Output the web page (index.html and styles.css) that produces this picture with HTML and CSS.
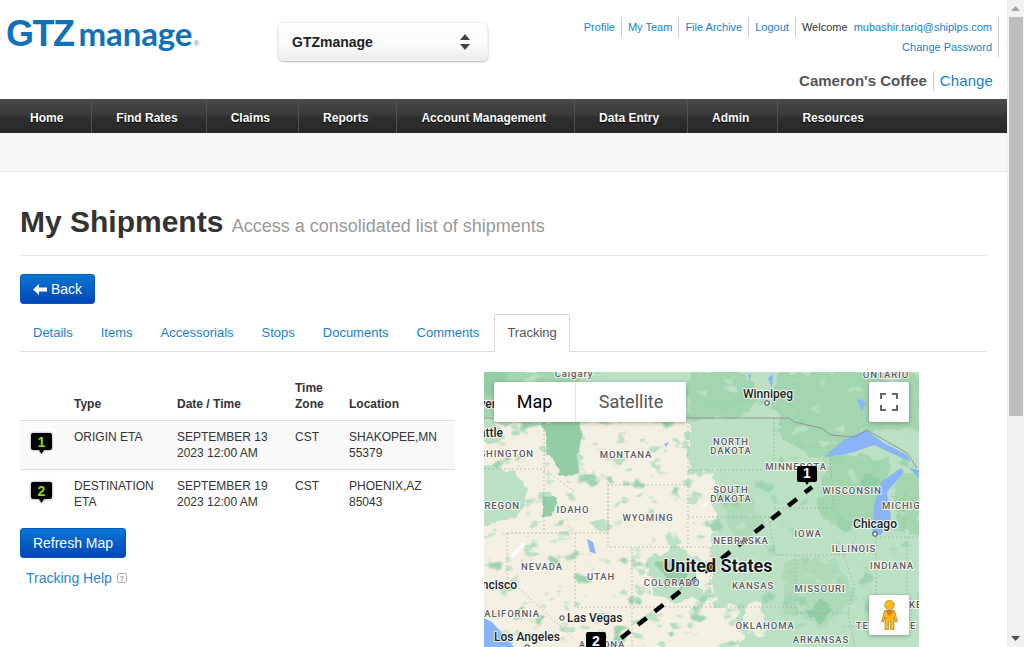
FILE: index.html
```html
<!DOCTYPE html>
<html lang="en">
<head>
<meta charset="utf-8">
<title>My Shipments</title>
<link rel="stylesheet" href="styles.css">
</head>
<body>
<div class="viewport">
  <main class="page">
    <header class="top">
      <a class="logo"><span class="logo-gtz">GTZ</span><span class="logo-manage">manage</span><span class="logo-reg">®</span></a>
      <div class="picker">
        <span>GTZmanage</span>
        <svg class="picker-arrows" width="10" height="16" viewBox="0 0 10 16"><path d="M5 0l5 6H0z M0 10h10l-5 6z" fill="#444"/></svg>
      </div>
      <div class="account">
        <div class="links">
          <a class="lnk">Profile</a><a class="lnk">My Team</a><a class="lnk">File Archive</a><a class="lnk">Logout</a><span class="lnk welcome">Welcome&nbsp; <a>mubashir.tariq@shiplps.com</a></span>
        </div>
        <div class="links"><a class="lnk last">Change Password</a></div>
        <div class="company"><b>Cameron's Coffee</b><a>Change</a></div>
      </div>
    </header>
    <nav class="nav">
      <a class="first">Home</a><a>Find Rates</a><a>Claims</a><a>Reports</a><a>Account Management</a><a>Data Entry</a><a>Admin</a><a class="plain">Resources</a>
    </nav>
    <div class="subbar"></div>
    <section class="content">
      <h1 class="title">My Shipments <small>Access a consolidated list of shipments</small></h1>
      <a class="btn back"><svg width="14" height="11" viewBox="0 0 14 11"><path d="M0 5.500L6 0v3.500h8v4H6V11z" fill="#fff"/></svg>Back</a>
      <ul class="tabs">
        <li>Details</li><li>Items</li><li>Accessorials</li><li>Stops</li><li>Documents</li><li>Comments</li><li class="active">Tracking</li>
      </ul>
      <div class="tracking">
        <div class="left">
          <table class="stops">
            <thead>
              <tr><th class="c-icon"></th><th class="c-type">Type</th><th class="c-date">Date / Time</th><th class="c-zone">Time Zone</th><th>Location</th></tr>
            </thead>
            <tbody>
              <tr class="odd">
                <td class="icon-cell"><svg class="pin" width="27" height="27" viewBox="0 0 27 27"><path class="pin-shape" d="M5 4h17a2 2 0 0 1 2 2v13a2 2 0 0 1-2 2h-6l-2.500 4-2.500-4H5a2 2 0 0 1-2-2V6a2 2 0 0 1 2-2z"/><text x="13.500" y="17.500" class="pin-num">1</text></svg></td>
                <td>ORIGIN ETA</td><td>SEPTEMBER 13 2023 12:00 AM</td><td>CST</td><td>SHAKOPEE,MN 55379</td>
              </tr>
              <tr>
                <td class="icon-cell"><svg class="pin" width="27" height="27" viewBox="0 0 27 27"><path class="pin-shape" d="M5 4h17a2 2 0 0 1 2 2v13a2 2 0 0 1-2 2h-6l-2.500 4-2.500-4H5a2 2 0 0 1-2-2V6a2 2 0 0 1 2-2z"/><text x="13.500" y="17.500" class="pin-num">2</text></svg></td>
                <td>DESTINATION ETA</td><td>SEPTEMBER 19 2023 12:00 AM</td><td>CST</td><td>PHOENIX,AZ 85043</td>
              </tr>
            </tbody>
          </table>
          <a class="btn refresh">Refresh Map</a>
          <p class="help"><a>Tracking Help</a><svg width="10" height="10" viewBox="0 0 10 10"><rect x=".5" y=".5" width="9" height="9" rx="1" fill="none" stroke="#aaa"/><text x="5" y="8" class="help-q">?</text></svg></p>
        </div>
        <div class="map">
          <svg class="map-art" width="435" height="275" viewBox="0 0 435 275">
            <defs>
              <filter id="terrain" x="-5%" y="-5%" width="110%" height="110%">
                <feTurbulence type="fractalNoise" baseFrequency=".07" numOctaves="3" seed="7" result="n"/>
                <feDisplacementMap in="SourceGraphic" in2="n" scale="16" xChannelSelector="R" yChannelSelector="G"/>
                <feGaussianBlur stdDeviation=".6"/>
              </filter>
              <filter id="speckle" x="0" y="0" width="100%" height="100%" color-interpolation-filters="sRGB">
                <feTurbulence type="fractalNoise" baseFrequency=".055 .075" numOctaves="3" seed="12"/>
                <feColorMatrix values="0 0 0 0 .733  0 0 0 0 .878  0 0 0 0 .769  9 0 0 0 -5.700"/>
                <feGaussianBlur stdDeviation=".4"/>
              </filter>
              <filter id="speckle-dark" x="0" y="0" width="100%" height="100%" color-interpolation-filters="sRGB">
                <feTurbulence type="fractalNoise" baseFrequency=".04 .05" numOctaves="3" seed="31"/>
                <feColorMatrix values="0 0 0 0 .62  0 0 0 0 .83  0 0 0 0 .68  0 9 0 0 -5.900"/>
                <feGaussianBlur stdDeviation=".5"/>
              </filter>
            </defs>
            <rect width="435" height="275" fill="#bbe0c4"/>
            <g filter="url(#terrain)">
              <path fill="#a3d5af" d="M290 0h145v60l-40-2-30 20-40 8-25-20-10-30zM345 88l30-6 30 6-5 30-12 30-40 10-15-30zM410 105l25-5v60l-22 0zM0 0h100v20l-30 25H0zM205 0h60l10 30-15 16h-55z"/>
              <path fill="#aedab8" d="M300 190l50-5 25 40-35 30-40-10zM235 120l30-5 15 40-30 10z"/>
              <path fill="#f4efe3" d="M-8 52h66l6 28 30 20 4-50h106v50h28v60l-6 15 4 60 24-2 3 50h-220l-16-25-30-10zM262 232l18-2 2 34-20-2z"/>
            </g>
            <rect width="435" height="275" filter="url(#speckle)"/>
            <rect width="435" height="275" filter="url(#speckle-dark)"/>
            <g filter="url(#terrain)">
              <path fill="#bbe0c4" d="M170 182l24-6 20 8 0 42-24 4-20-8-6-20zM-8 52h20l10 10-8 8-22 0zM-8 92l40 6 12 22-12 28-40 8z"/>
              <path fill="#93cda5" d="M60 48h36l-2 28-2 24-12 8-12-20-8-26zM60 120l14 6-6 20-10-4zM172 192l16-6 12 12-2 20-14-4zM0 0h26l-6 20-20 4zM325 235l14-6 8 10-10 12-10-4zM380 100l14 6-6 18-12-4z"/>
              <path fill="#e9efdd" d="M282 238l-14 2-8 16 20 4z"/>
            </g>
            <path fill="#8ab4f8" d="M340 85l20-17 22-10 18 13 23 12 4 7-20-9-17-8-20 7-13 3zM388 163l2-30 7-23 20-14 3 4-17 20 4 26-10 17zM425 96l10 2v8zM0 246l8 4 10 12 12 13H0zM284 6l5-4-1 14zM373 26l9 4-4 10zM103 167l6 3 3 12-6-2zM264 2l3 0-1 8zM180 72l5-2-3 5z"/>
            <path fill="#fff" d="M26 184l13-14 2 3-13 13zM218 133l7-5-4 7z"/>
            <path class="borders" d="M0 97h60M60 50v50M60 97l30 22M60 100v60M23 161h101v-48h80M204 50v125M124 113v62h102v60M91 161v74h135M148 176v99M23 161v44l68 63M204 98h86M204 145h81M285 145l6 38 7 0M290 46v52M290 136h60M298 183h62M312 183v58M312 241h52M226 235h86M364 241l6 30M350 136l22 30 -12 17 10 30-6 28M345 75l5 61M392 165v70M423 165v95M392 165h43M392 235l31 0M360 255l75-2M420 160v-40"/>
            <path class="canada" d="M0 46h305l5 4 27 6 10 7 23 2 13-7 40 23 10 15"/>
            <path class="route" d="M328 115L131 271"/>
            <g class="labels">
              <text class="st" x="90" y="5">Calgary</text>
              <text class="city" x="12" y="36" text-anchor="end">Vancouver</text>
              <text class="city" x="19" y="65" text-anchor="end">Seattle</text>
              <text class="st" x="50" y="85" text-anchor="end">WASHINGTON</text>
              <text class="st" x="142" y="86">MONTANA</text>
              <text class="st" x="247" y="73">NORTH</text>
              <text class="st" x="247" y="82">DAKOTA</text>
              <text class="st" x="247" y="121">SOUTH</text>
              <text class="st" x="247" y="130">DAKOTA</text>
              <text class="st" x="36" y="137" text-anchor="end">OREGON</text>
              <text class="st" x="89" y="141">IDAHO</text>
              <text class="st" x="164" y="149">WYOMING</text>
              <text class="st" x="58" y="198">NEVADA</text>
              <text class="st" x="117" y="208">UTAH</text>
              <text class="st" x="188" y="214">COLORADO</text>
              <text class="st" x="269" y="217">KANSAS</text>
              <text class="st" x="56" y="245" text-anchor="end">CALIFORNIA</text>
              <text class="st" x="281" y="257">OKLAHOMA</text>
              <text class="st" x="118" y="276">ARIZONA</text>
              <text class="st" x="402" y="6">ONTARIO</text>
              <text class="st" x="312" y="98">MINNESOTA</text>
              <text class="st" x="368" y="122">WISCONSIN</text>
              <text class="st" x="398" y="137" text-anchor="start">MICHIGAN</text>
              <text class="st" x="257" y="172">NEBRASKA</text>
              <text class="st" x="324" y="165">IOWA</text>
              <text class="st" x="370" y="180">ILLINOIS</text>
              <text class="st" x="408" y="197">INDIANA</text>
              <text class="st" x="336" y="220">MISSOURI</text>
              <text class="st" x="337" y="271">ARKANSAS</text>
              <text class="st" x="402" y="257">TENNESSEE</text>
              <text class="st" x="425" y="236" text-anchor="start">KENTUCKY</text>
              <text class="city" x="284" y="26">Winnipeg</text>
              <text class="city" x="391" y="156">Chicago</text>
              <text class="city" x="33" y="217" text-anchor="end">San Francisco</text>
              <text class="city" x="83" y="250" text-anchor="start">Las Vegas</text>
              <text class="city" x="43" y="269">Los Angeles</text>
              <text class="country" x="234" y="200">United States</text>
              <circle class="dot" cx="283" cy="31" r="2.200"/>
              <circle class="dot" cx="391" cy="162" r="2.200"/>
              <circle class="dot" cx="78" cy="246" r="2.200"/>
              <circle class="dot" cx="43" cy="275" r="2.200"/>
            </g>
            <g>
              <path d="M315 94h16a2 2 0 0 1 2 2v12a2 2 0 0 1-2 2h-6l-2 3-2-3h-6a2 2 0 0 1-2-2V96a2 2 0 0 1 2-2z" fill="#000"/>
              <text class="map-pin" x="323" y="106">1</text>
              <path d="M104 260h16a2 2 0 0 1 2 2v12a2 2 0 0 1-2 2h-6l-2 3-2-3h-6a2 2 0 0 1-2-2v-12a2 2 0 0 1 2-2z" fill="#000"/>
              <text class="map-pin" x="112" y="274">2</text>
            </g>
          </svg>
          <div class="map-type"><span class="on">Map</span><span>Satellite</span></div>
          <div class="map-ctl full"><svg width="18" height="18" viewBox="0 0 18 18"><path d="M0 6V0h6v2H2v4zM12 0h6v6h-2V2h-4zM0 12h2v4h4v2H0zM16 12h2v6h-6v-2h4z" fill="#666"/></svg></div>
          <div class="map-ctl peg"><svg width="17" height="30" viewBox="0 0 17 30"><circle cx="8.500" cy="5" r="4.800" fill="#fdb813" stroke="#a9812a" stroke-width=".6"/><path d="M3.500 10.500h10l3 11-2 .5-1.500-5v13H9.500v-8h-2v8H4v-13l-1.500 5-2-.5z" fill="#fdb813" stroke="#8c7a3d" stroke-width=".6"/><path d="M4 10.500h9l-4.500 6z" fill="#e8762d"/></svg></div>
        </div>
      </div>
    </section>
  </main>
  <aside class="scrollbar">
    <div class="sb-btn"><svg width="9" height="5" viewBox="0 0 9 5"><path d="M4.500 0L9 5H0z" fill="#a3a3a3"/></svg></div>
    <div class="sb-thumb"></div>
    <div class="sb-space"></div>
    <div class="sb-btn"><svg width="9" height="5" viewBox="0 0 9 5"><path d="M0 0h9L4.500 5z" fill="#505050"/></svg></div>
  </aside>
</div>
</body>
</html>
```

FILE: styles.css
```css
* { box-sizing: border-box; }
html, body { margin: 0; padding: 0; height: 647px; overflow: hidden; background: #fff; }
body { font-family: "Liberation Sans", Arial, sans-serif; font-size: 14px; color: #333; }
a { color: #1a7fc9; text-decoration: none; }

.viewport { display: flex; height: 647px; overflow: hidden; }
.page { width: 1007px; flex: none; height: 647px; overflow: hidden; }

.scrollbar { width: 17px; flex: none; background: #f1f1f1; display: flex; flex-direction: column; }
.sb-btn { height: 17px; flex: none; display: flex; align-items: center; justify-content: center; }
.sb-thumb { height: 399px; margin: 0 1px 0 2px; background: #bdbdbd; flex: none; }
.sb-space { flex: 1; }

.top { height: 99px; display: flex; position: relative; }
.logo { width: 278px; flex: none; padding: 11px 0 0 6px; color: #0f71b8; display: flex; align-items: baseline; height: 60px; white-space: nowrap; }
.logo-gtz { font: 700 36px/44px "Liberation Sans", sans-serif; letter-spacing: -1.500px; }
.logo-manage { font: 700 33px/44px Lato, sans-serif; margin-left: 5px; letter-spacing: -.1px; }
.logo-reg { font: 400 8px/10px "Liberation Sans", sans-serif; margin-left: 1px; color: #4d9bd0; }

.picker { width: 210px; height: 39px; margin-top: 22px; flex: none; padding: 0 17px 0 13px; display: flex; align-items: center; justify-content: space-between; font-weight: 700; font-size: 14px; color: #222; border-radius: 6px; border: 1px solid #f0f0f0; background: linear-gradient(#fff, #fafafa 60%, #ececec); box-shadow: 0 1px 2px rgba(0,0,0,.3); }

.account { flex: 1; padding: 17px 8px 0 0; display: flex; flex-direction: column; align-items: flex-end; font-size: 11px; }
.links { display: flex; height: 20px; align-items: stretch; border-right: 1px solid #ccc; }
.lnk { padding: 0 6px; line-height: 20px; border-right: 1px solid #ccc; }
.lnk:last-child { border-right: 0; }
.welcome { color: #333; }
.company { margin-top: 14px; margin-right: 6px; display: flex; height: 20px; align-items: center; }
.company b { font-size: 15px; color: #555; padding-right: 6px; border-right: 1px solid #ccd; line-height: 20px; white-space: nowrap; }
.company a { font-size: 15px; padding-left: 6px; line-height: 20px; letter-spacing: .1px; }

.nav { height: 34px; display: flex; background: linear-gradient(#4b4b4b, #3a3a3a 45%, #2f2f2f 55%, #282828); }
.nav a { font-size: 12px; font-weight: 700; color: #fff; line-height: 38px; height: 34px; padding: 0 28px 0 24px; border-right: 1px solid #515151; text-shadow: 0 1px 1px #000; }
.nav a.first { padding-left: 30px; }
.nav a.plain { border-right: 0; }

.subbar { height: 39px; background: #f7f7f7; border-bottom: 1px solid #e2e2e2; }

.content { padding: 0 20px; }
.title { margin: 32px 0 0; height: 52px; font-size: 30px; font-weight: 700; line-height: 36px; color: #333; border-bottom: 1px solid #e8e8e8; white-space: nowrap; }
.title small { font-size: 18px; font-weight: 400; color: #999; }

.btn { display: inline-flex; align-items: center; justify-content: center; height: 30px; font-size: 14px; color: #fff; border-radius: 3px; background: linear-gradient(#0a76d2, #0046b8); border: 1px solid #0058c0; }
.back { width: 75px; margin-top: 18px; gap: 4px; }

.tabs { list-style: none; margin: 10px 0 0; padding: 0; display: flex; height: 38px; border-bottom: 1px solid #ddd; font-size: 13px; color: #1a7fc9; }
.tabs li { padding: 0 13px; margin-right: 2px; line-height: 36px; height: 38px; border: 1px solid transparent; border-left: 0; border-right: 0; }
.tabs li.active { padding: 0 12px; color: #555; background: #fff; border: 1px solid #ddd; border-bottom-color: #fff; }

.tracking { display: flex; gap: 29px; margin-top: 20px; align-items: flex-start; }
.left { width: 435px; flex: none; }

.stops { width: 435px; border-collapse: collapse; table-layout: fixed; font-size: 12px; line-height: 16px; margin-top: 8px; }
.stops th { text-align: left; vertical-align: bottom; padding: 0 8px 8px; color: #333; border-bottom: 1px solid #ddd; font-weight: 700; }
.stops td { vertical-align: top; padding: 8px 8px 8px; border-bottom: 1px solid #ddd; }
.stops tr:last-child td { border-bottom: 0; }
.stops .odd { background: #f9f9f9; }
.c-icon { width: 46px; }
.c-type { width: 103px; }
.c-date { width: 118px; }
.c-zone { width: 54px; }
.icon-cell { padding: 8px 0 0 8px !important; line-height: 0; }
.pin { background: #fff; display: block; }
.pin-shape { fill: #000; filter: drop-shadow(0 0 1.500px rgba(0,0,0,.45)); }
.pin-num { font: 700 14px "Liberation Sans", sans-serif; fill: #8fd61f; text-anchor: middle; }

.refresh { width: 106px; margin-top: 10px; }
.help { margin: 12px 0 0 6px; display: flex; align-items: center; gap: 5px; line-height: 16px; }
.help a { color: #2a86c8; }
.help-q { font: 700 7px "Liberation Sans", sans-serif; fill: #999; text-anchor: middle; }

.map { width: 435px; height: 275px; flex: none; position: relative; overflow: hidden; }
.map-art { display: block; }
.borders { fill: none; stroke: #9a9a9a; stroke-width: .7; stroke-dasharray: 2 2; opacity: .8; }
.canada { fill: none; stroke: #86888a; stroke-width: .8; }
.route { fill: none; stroke: #000; stroke-width: 4.500; stroke-dasharray: 11 10.300; stroke-dashoffset: 2; }
.labels text { font-family: Roboto, sans-serif; text-anchor: middle; paint-order: stroke; stroke: rgba(255,255,255,.85); stroke-width: 2px; stroke-linejoin: round; }
.labels .st { font-size: 9.500px; letter-spacing: .9px; font-weight: 500; fill: #5b5b5b; }
.labels .city { font-size: 12px; font-weight: 500; fill: #222; }
.labels .country { font-size: 18px; font-weight: 700; fill: #17191b; }
.labels text[text-anchor="end"] { text-anchor: end; }
.labels text[text-anchor="start"] { text-anchor: start; }
.dot { fill: #fff; stroke: #333; stroke-width: 1; }
.map-pin { font: 700 14px "Liberation Sans", sans-serif; fill: #fff; text-anchor: middle; }

.map-type { position: absolute; left: 10px; top: 10px; height: 40px; display: flex; background: #fff; border-radius: 2px; box-shadow: 0 1px 4px rgba(0,0,0,.3); font: 400 18px/40px Roboto, sans-serif; color: #565656; }
.map-type span { width: 110px; text-align: center; }
.map-type .on { width: 82px; color: #000; border-right: 1px solid #e6e6e6; }
.map-ctl { position: absolute; left: 385px; width: 40px; height: 40px; background: #fff; border-radius: 2px; box-shadow: 0 1px 4px rgba(0,0,0,.3); display: flex; align-items: center; justify-content: center; }
.full { top: 10px; }
.peg { top: 223px; }
```
